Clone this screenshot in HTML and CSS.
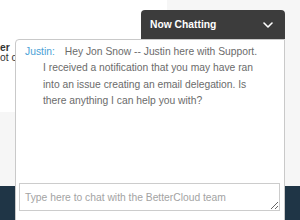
FILE: index.html
```html
<!DOCTYPE html>
<html>
<head>
<meta charset="utf-8">
<link rel="stylesheet" href="styles.css">
</head>
<body>
<div class="page">
  <div class="card">
    <div class="card-title">er</div>
    <div class="card-text">ot c</div>
  </div>
  <div class="spacer"></div>
  <div class="footer"></div>
</div>

<div class="chat">
  <div class="chat-header">
    <span class="chat-title">Now Chatting</span>
    <svg class="chevron" width="10" height="6" viewBox="0 0 10 6"><path d="M1 1 L5 5 L9 1" fill="none" stroke="#fff" stroke-width="1.6" stroke-linecap="round" stroke-linejoin="round"/></svg>
  </div>
  <div class="chat-body">
    <div class="messages">
      <div class="message">
        <div class="msg-first"><span class="agent">Justin:</span><span class="msg-text">Hey Jon Snow -- Justin here with Support.</span></div>
        <div class="msg-rest">I received a notification that you may have ran into an issue creating an email delegation. Is there anything I can help you with?</div>
      </div>
    </div>
    <textarea class="input" placeholder="Type here to chat with the BetterCloud team"></textarea>
  </div>
</div>
</body>
</html>
```
FILE: styles.css
```css
html, body {
  margin: 0;
  padding: 0;
}
body {
  font-family: "Liberation Sans", Arial, sans-serif;
  overflow: hidden;
}
.page {
  width: 300px;
  height: 220px;
  display: flex;
  flex-direction: column;
  background: #f6f6f6;
}
.card {
  width: 167px;
  height: 112px;
  box-sizing: border-box;
  background: #ffffff;
  padding-top: 43px;
  font-size: 10.3px;
  line-height: 10px;
  color: #333;
  white-space: nowrap;
}
.card-title {
  font-weight: bold;
}
.spacer {
  flex: 1;
}
.footer {
  height: 34px;
  background: #1f3546;
}
.chat {
  position: absolute;
  top: 10px;
  right: 15px;
  width: 270px;
  display: flex;
  flex-direction: column;
}
.chat-header {
  align-self: flex-end;
  width: 144px;
  height: 29px;
  box-sizing: border-box;
  padding: 0 12px 0 9px;
  background: #3c3c3c;
  border-radius: 4px 4px 0 0;
  display: flex;
  align-items: center;
  justify-content: space-between;
}
.chat-title {
  color: #ffffff;
  font-weight: bold;
  font-size: 10.3px;
}
.chevron {
  display: block;
}
.chat-body {
  height: 190px;
  box-sizing: border-box;
  background: #ffffff;
  border: 1px solid #c9c9c9;
  border-top-left-radius: 4px;
  padding: 0 4px 0 3px;
  display: flex;
  flex-direction: column;
}
.messages {
  height: 143px;
  padding: 4px 22px 0 6px;
  box-sizing: border-box;
}
.message {
  font-size: 10.3px;
  line-height: 16.3px;
  color: #6b6b6b;
}
.msg-first {
  display: flex;
  white-space: nowrap;
}
.agent {
  color: #4a9fd6;
  margin-right: 10px;
}
.msg-rest {
  padding-left: 18px;
}
.input {
  display: block;
  width: 100%;
  height: 28px;
  box-sizing: border-box;
  margin: 0;
  padding: 6px 5px 5px;
  border: 1px solid #cccccc;
  border-radius: 0;
  font-family: "Liberation Sans", Arial, sans-serif;
  font-size: 10.3px;
  line-height: 15px;
  color: #555;
  background: #fff;
  outline: none;
}
.input::placeholder {
  color: #a3a3a3;
}
```
